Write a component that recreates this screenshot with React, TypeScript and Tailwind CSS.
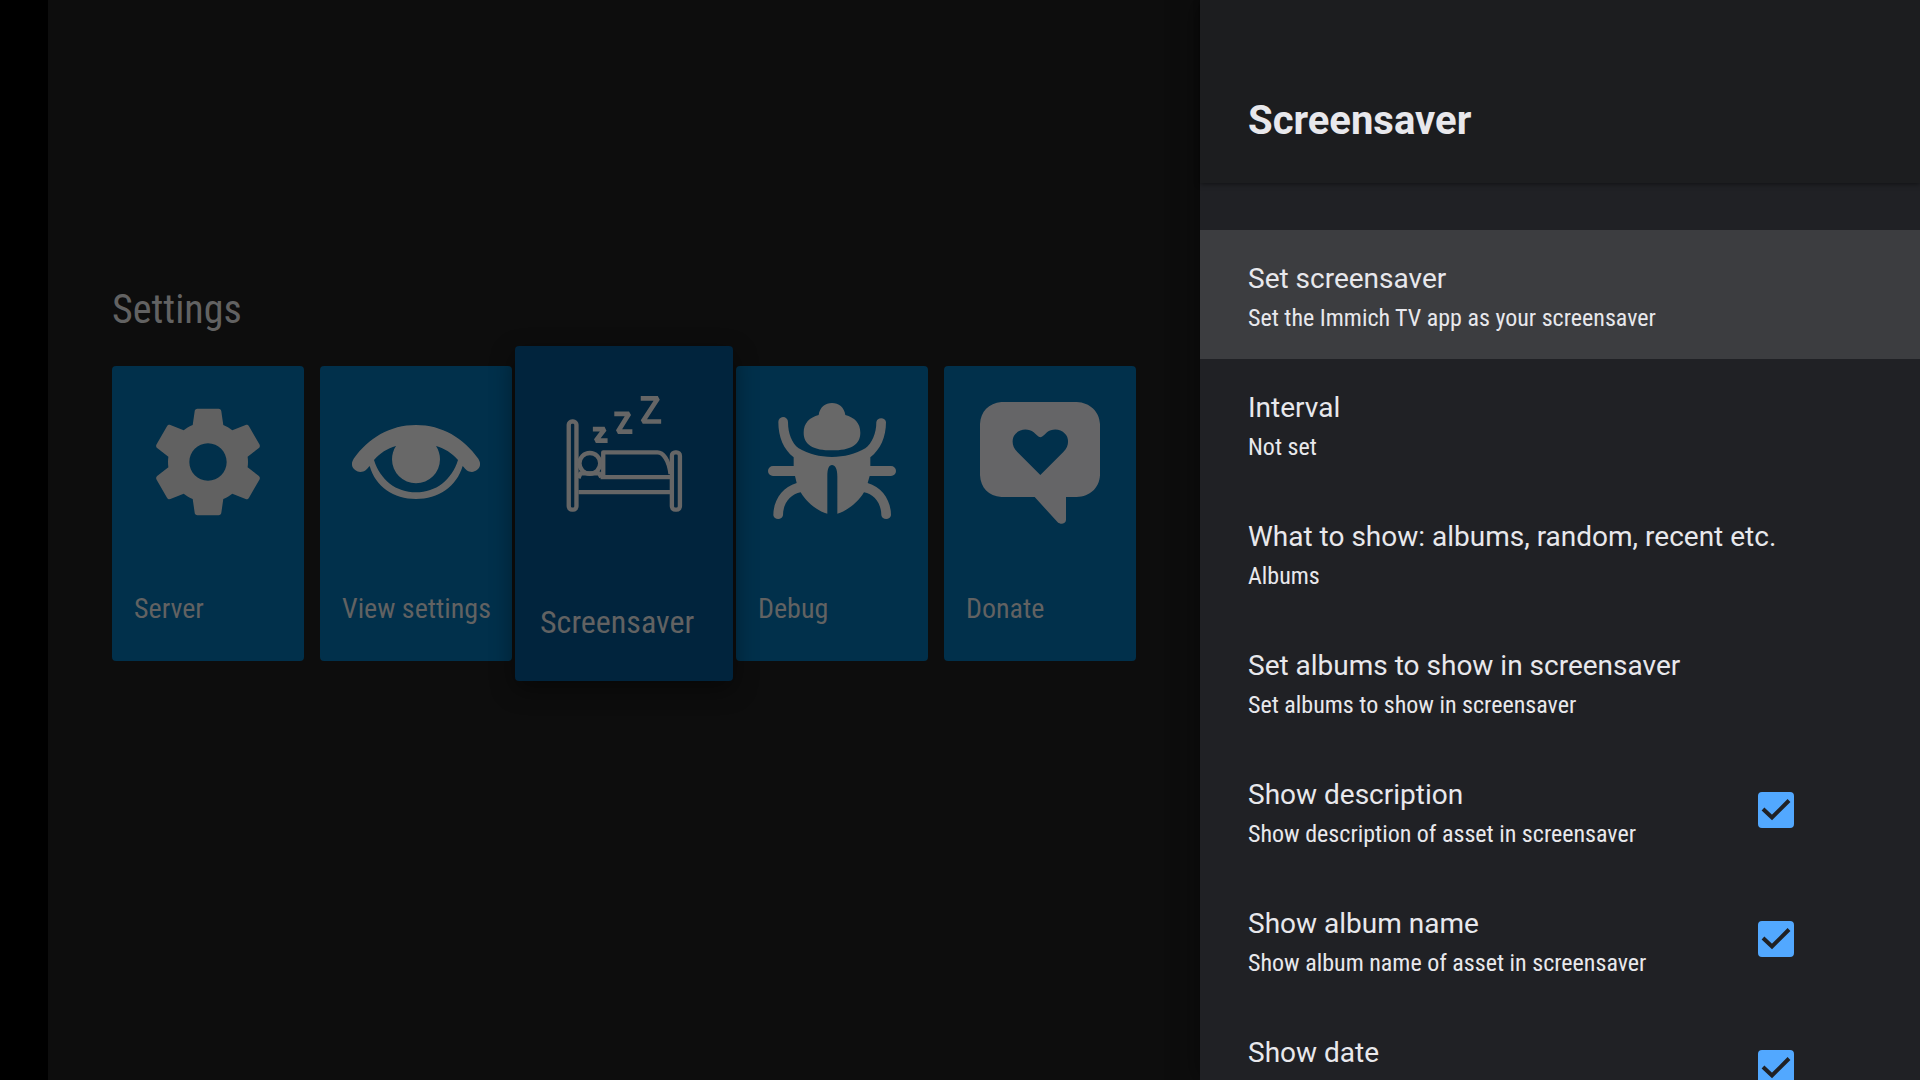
import { useState } from "react";
import type { ReactNode } from "react";

const condensed = "font-['Roboto_Condensed','Roboto',sans-serif]";

function GearIcon() {
  return (
    <svg viewBox="0 0 24 24" className="size-32 fill-[#616161]" aria-hidden="true">
      <path d="M19.43 12.98c.04-.32.07-.64.07-.98s-.03-.66-.07-.98l2.11-1.65c.19-.15.24-.42.12-.64l-2-3.46c-.12-.22-.39-.3-.61-.22l-2.49 1c-.52-.4-1.08-.73-1.69-.98l-.38-2.65C14.46 2.18 14.25 2 14 2h-4c-.25 0-.46.18-.49.42l-.38 2.65c-.61.25-1.17.59-1.69.98l-2.49-1c-.23-.09-.49 0-.61.22l-2 3.46c-.13.22-.07.49.12.64l2.11 1.65c-.04.32-.07.65-.07.98s.03.66.07.98l-2.11 1.65c-.19.15-.24.42-.12.64l2 3.46c.12.22.39.3.61.22l2.49-1c.52.4 1.08.73 1.69.98l.38 2.65c.03.24.24.42.49.42h4c.25 0 .46-.18.49-.42l.38-2.65c.61-.25 1.17-.59 1.69-.98l2.49 1c.23.09.49 0 .61-.22l2-3.46c.12-.22.07-.49-.12-.64l-2.11-1.65zM12 15.5c-1.93 0-3.5-1.57-3.5-3.5s1.57-3.5 3.5-3.5 3.5 1.57 3.5 3.5-1.57 3.5-3.5 3.5z" />
    </svg>
  );
}

function EyeIcon() {
  return (
    <svg viewBox="126 144 384 384" className="size-32 fill-[#686868]" aria-hidden="true">
      <path
        fillRule="evenodd"
        d="M131 326C175 264 240 225 318 225S461 264 505 326C520 350 500 365 486 366C473 366 466 357 458 348C440 410 385 447 318 447S196 410 179 348C171 357 164 366 151 366C136 365 116 350 131 326ZM192 330C210 310 232 295 258 288C250 300 246 314 246 328A72 72 0 0 0 390 328C390 314 386 300 378 288C404 295 426 310 444 330C425 390 378 427 318 427S211 390 192 330Z"
      />
    </svg>
  );
}

function BedIcon() {
  return (
    <svg
      viewBox="154 157 436 436"
      className="size-[146px] fill-none stroke-[#666]"
      strokeWidth="13"
      strokeLinejoin="round"
      aria-hidden="true"
    >
      <rect x="207" y="275" width="23" height="263" rx="10" />
      <rect x="515" y="367" width="24" height="171" rx="10" />
      <circle cx="270" cy="400" r="31" />
      <path d="M236 444L242 430H298L304 441M310 441V367H472C488 367 506 388 511 432M302 441H510M236 486H510" />
      <g strokeWidth="14" strokeLinejoin="bevel">
        <path d="M279 298H314L288 332H323" />
        <path d="M343 252H387L354 305H397" />
        <path d="M422 206H473L428 275H483" />
      </g>
    </svg>
  );
}

function BugIcon() {
  return (
    <svg viewBox="113 144 384 384" className="size-32 fill-[#686868]" aria-hidden="true">
      <path d="M265 195C268 172 285 159 305 159S342 172 345 195C372 203 390 218 390 248C390 285 360 301 305 301S220 285 220 248C220 218 238 203 265 195Z" />
      <path d="M158 201A15 15 0 0 1 173 216C173 250 185 280 205 295C235 312 268 321 305 321S375 312 405 295C425 280 438 250 438 216A15 15 0 0 1 467 216C467 262 450 298 420 322V348H482A15 15 0 0 1 482 378H418L412 399C455 412 482 450 482 496A15 15 0 0 1 453 496C453 458 430 432 401 427C383 457 350 483 321 491V380C321 355 314 345 305 345S291 355 291 380V491C260 483 229 457 211 427C182 432 158 458 158 496A15 15 0 0 1 129 496C129 450 156 412 199 399L194 378H128A15 15 0 0 1 128 348H190V322C160 298 144 262 144 216A15 15 0 0 1 158 201Z" />
    </svg>
  );
}

function DonateIcon() {
  return (
    <svg viewBox="138 144 384 384" className="size-32 fill-[#656567]" aria-hidden="true">
      <path
        fillRule="evenodd"
        d="M214 156H440C480 158 508 184 510 222V376C508 414 480 440 440 441H408V510C407 522 392 525 383 517L314 441H214C176 438 152 414 150 376V222C152 184 176 160 214 156ZM331 375L262 306C243 288 245 262 257 251C272 235 297 236 311 247C319 254 325 262 331 262S344 254 351 247C365 236 390 235 405 251C417 262 419 288 400 306Z"
      />
    </svg>
  );
}

type CardProps = { label: string; icon: ReactNode; focused?: boolean };

function SettingsCard({ label, icon, focused }: CardProps) {
  return (
    <button
      type="button"
      className={
        focused
          ? "relative z-10 -mx-[13px] flex h-[335px] w-[218px] shrink-0 flex-col items-center justify-between rounded bg-[#01243d] pt-9 pb-[41px] shadow-[0_8px_24px_rgba(0,0,0,0.45)]"
          : "flex h-[295px] w-48 shrink-0 flex-col items-center justify-between rounded bg-[#01304b] pt-8 pb-9"
      }
    >
      {icon}
      <span
        className={
          focused
            ? "w-full px-[25px] text-left text-[32px] leading-9 whitespace-nowrap text-[#626262]"
            : "w-full px-[22px] text-left text-[28px] leading-8 whitespace-nowrap text-[#626262]"
        }
      >
        {label}
      </span>
    </button>
  );
}

function PreferenceText({ title, summary }: { title: string; summary?: string }) {
  return (
    <span className="flex flex-col gap-[9px] self-start pt-[31px] pb-7 text-left whitespace-nowrap text-[#e8e8ec]">
      <span className="text-[28px] leading-9">{title}</span>
      {summary && <span className={`${condensed} text-2xl leading-6`}>{summary}</span>}
    </span>
  );
}

function ActionRow({ title, summary, focused }: { title: string; summary: string; focused?: boolean }) {
  return (
    <button
      type="button"
      className={
        focused
          ? "flex min-h-[129px] w-full shrink-0 bg-[#3c3d40] px-12"
          : "flex min-h-[129px] w-full shrink-0 px-12"
      }
    >
      <PreferenceText title={title} summary={summary} />
    </button>
  );
}

function ToggleRow({ title, summary }: { title: string; summary?: string }) {
  const [checked, setChecked] = useState(true);
  return (
    <label className="flex min-h-[129px] w-full shrink-0 items-center justify-between pr-[126px] pb-px pl-12">
      <PreferenceText title={title} summary={summary} />
      <span className="grid size-9">
        <input
          type="checkbox"
          checked={checked}
          onChange={(e) => setChecked(e.target.checked)}
          className="peer col-start-1 row-start-1 size-9 appearance-none rounded border-2 border-[#52a8ff] checked:bg-[#52a8ff]"
        />
        <svg
          viewBox="0 0 36 36"
          className="pointer-events-none invisible col-start-1 row-start-1 size-9 fill-none stroke-[#202125] peer-checked:visible"
          strokeWidth="4"
          aria-hidden="true"
        >
          <path d="M5 17L14 25.5L31 8.5" />
        </svg>
      </span>
    </label>
  );
}

export default function App() {
  return (
    <div className="flex h-screen overflow-hidden bg-black pl-12 font-['Roboto',sans-serif]">
      <main className={`min-w-0 flex-1 bg-[#0d0d0d] pt-[286px] pl-16 ${condensed}`}>
        <h1 className="text-[40px] leading-12 text-[#626262]">Settings</h1>
        <div className="mt-3 flex items-center gap-4">
          <SettingsCard label="Server" icon={<GearIcon />} />
          <SettingsCard label="View settings" icon={<EyeIcon />} />
          <SettingsCard label="Screensaver" icon={<BedIcon />} focused />
          <SettingsCard label="Debug" icon={<BugIcon />} />
          <SettingsCard label="Donate" icon={<DonateIcon />} />
        </div>
      </main>
      <aside className="relative z-20 flex w-[720px] shrink-0 flex-col bg-[#202125] shadow-[0_0_24px_rgba(0,0,0,0.5)]">
        <header className="relative z-10 shrink-0 bg-[#1c1d1f] px-12 pt-[97px] pb-[38px] shadow-[0_1px_5px_rgba(0,0,0,0.5)]">
          <h2 className="text-[40px] leading-12 font-bold text-[#e8e8ec]">Screensaver</h2>
        </header>
        <div className="flex min-h-0 flex-1 flex-col overflow-hidden pt-[47px]">
          <ActionRow title="Set screensaver" summary="Set the Immich TV app as your screensaver" focused />
          <ActionRow title="Interval" summary="Not set" />
          <ActionRow title="What to show: albums, random, recent etc." summary="Albums" />
          <ActionRow title="Set albums to show in screensaver" summary="Set albums to show in screensaver" />
          <ToggleRow title="Show description" summary="Show description of asset in screensaver" />
          <ToggleRow title="Show album name" summary="Show album name of asset in screensaver" />
          <ToggleRow title="Show date" />
        </div>
      </aside>
    </div>
  );
}
